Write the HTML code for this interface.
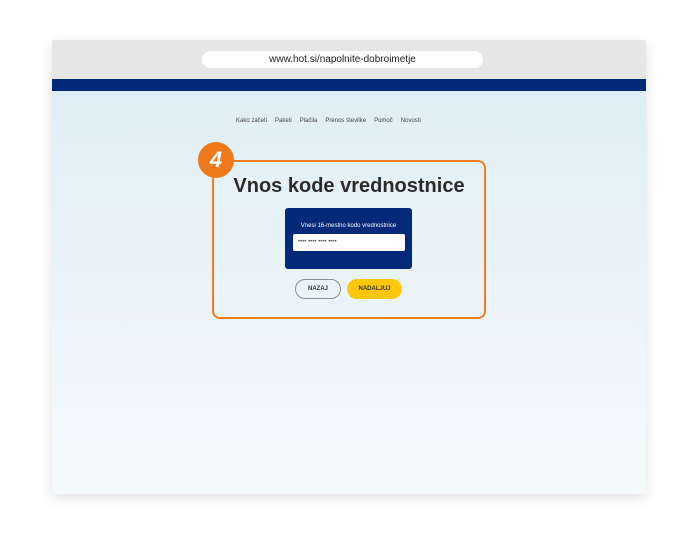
<!DOCTYPE html>
<html><head><style>
body{margin:0;width:700px;height:544px;background:#fff;font-family:"Liberation Sans",sans-serif;position:relative;overflow:hidden}
.win{position:absolute;left:52px;top:40px;width:594px;height:454px;box-shadow:0 4px 14px rgba(0,0,0,.12);background:linear-gradient(#dcedf5,#f3f8fb 90%);border-radius:2px;overflow:hidden}
.bar{position:absolute;left:0;top:0;width:100%;height:39px;background:#e6e6e6}
.url{position:absolute;left:150px;top:11px;width:281px;height:17px;background:#fff;border-radius:9px;font-size:10px;line-height:17px;text-align:center;color:#222}
.blue{position:absolute;left:0;top:39px;width:100%;height:12px;background:#022a78}
.nav{position:absolute;top:78px;left:184px;font-size:6px;color:#444;white-space:nowrap}
.nav span{margin-right:8px}
.box{position:absolute;left:160px;top:120px;width:274px;height:159px;border:2px solid #f07e1e;border-radius:8px;box-sizing:border-box}
.circ{position:absolute;left:146px;top:102px;width:36px;height:36px;border-radius:50%;background:#f07a1a;color:#fff;font-weight:bold;font-size:22px;text-align:center;line-height:36px;font-style:italic}
h1{position:absolute;left:160px;top:135px;width:274px;margin:0;text-align:center;font-size:20px;color:#2b2b2b;font-weight:bold}
.card{position:absolute;left:233px;top:168px;width:127px;height:61px;background:#022a78;border-radius:3px}
.card .l{position:absolute;top:15px;width:100%;text-align:center;color:#fff;font-size:6px}
.inp{position:absolute;left:8px;top:26px;width:112px;height:17px;background:#fff;border-radius:2px;font-size:6px;line-height:17px;padding-left:5px;box-sizing:border-box;color:#555}
.b{position:absolute;top:239px;height:20px;border-radius:10px;font-size:6px;font-weight:bold;text-align:center;line-height:20px;color:#333;box-sizing:border-box}
</style></head><body>
<div class="win">
<div class="bar"><div class="url">www.hot.si/napolnite-dobroimetje</div></div>
<div class="blue"></div>
<div class="nav"><span>Kako začeti</span><span>Paketi</span><span>Plačila</span><span>Prenos številke</span><span>Pomoč</span><span>Novosti</span></div>
<div class="box"></div>
<div class="circ">4</div>
<h1>Vnos kode vrednostnice</h1>
<div class="card"><div class="l">Vnesi 16-mestno kodo vrednostnice</div><div class="inp">•••• •••• •••• ••••</div></div>
<div class="b" style="left:243px;width:46px;border:1px solid #8a9099;line-height:18px">NAZAJ</div>
<div class="b" style="left:295px;width:55px;background:#fdc70c">NADALJUJ</div>
</div>
</body></html>
